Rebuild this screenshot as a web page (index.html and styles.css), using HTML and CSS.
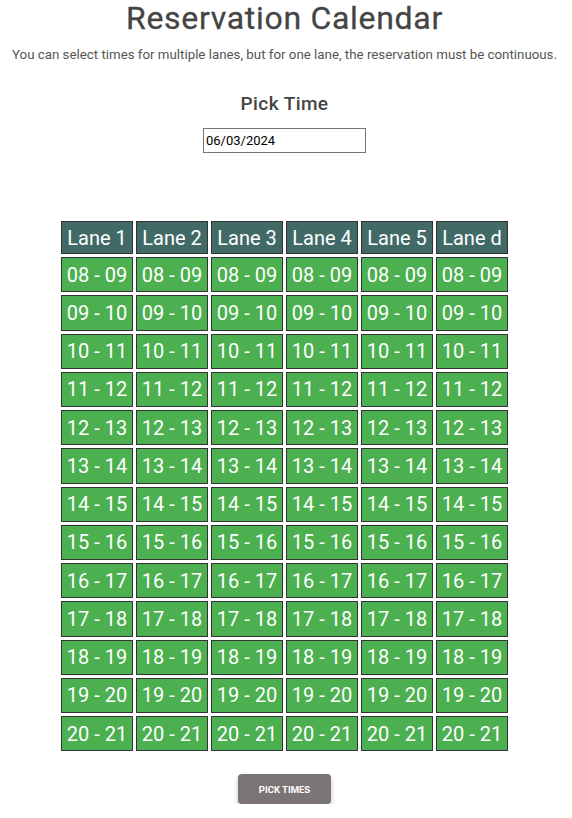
FILE: index.html
```html
<!DOCTYPE html>
<html>
<head>
<meta charset="utf-8">
<link rel="stylesheet" href="styles.css">
</head>
<body>
<div class="page">
  <h1 class="title">Reservation Calendar</h1>
  <p class="subtitle">You can select times for multiple lanes, but for one lane, the reservation must be continuous.</p>
  <h2 class="pick">Pick Time</h2>
  <input class="date" type="text" value="06/03/2024">
  <table class="cal">
    <thead>
      <tr><th>Lane 1</th><th>Lane 2</th><th>Lane 3</th><th>Lane 4</th><th>Lane 5</th><th>Lane d</th></tr>
    </thead>
    <tbody id="rows"></tbody>
  </table>
  <button class="btn">PICK TIMES</button>
</div>
<script src="app.js"></script>
</body>
</html>
```
FILE: app.js
```js
var tb = document.getElementById('rows');
for (var h = 8; h < 21; h++) {
  var a = (h < 10 ? '0' : '') + h, b = (h + 1 < 10 ? '0' : '') + (h + 1);
  var tr = document.createElement('tr');
  for (var i = 0; i < 6; i++) {
    var td = document.createElement('td');
    td.textContent = a + ' - ' + b;
    tr.appendChild(td);
  }
  tb.appendChild(tr);
}
```
FILE: styles.css
```css
html, body { margin: 0; padding: 0; background: #fff; }
body { font-family: Roboto, "Liberation Sans", sans-serif; color: #444; }
.page { display: flex; flex-direction: column; align-items: center; padding-right: 3px; }
.title { font-size: 32px; font-weight: 400; letter-spacing: 0.7px; line-height: 36px; margin: 0; color: #444; -webkit-text-stroke: 0.3px #444; }
.subtitle { font-size: 13.3px; margin: 11px 0 0; line-height: 16px; color: #555; }
.pick { font-size: 19px; font-weight: 500; letter-spacing: 0.4px; margin: 29px 0 0; line-height: 24px; color: #444; }
.date { margin-top: 12px; width: 163px; height: 25px; box-sizing: border-box; border: 1px solid #767676; padding: 0 2px; font-family: Roboto, sans-serif; font-size: 13px; color: #000; }
.cal { margin-top: 65px; border-collapse: separate; border-spacing: 3px; }
.cal th, .cal td { border: 1px solid #333; color: #fff; font-size: 20px; font-weight: 400; padding: 0; width: 72px; text-align: center; white-space: nowrap; box-sizing: border-box; }
.cal th { background: #416a67; height: 33px; }
.cal td { background: #4caf50; height: 35.25px; }
.btn { margin-top: 20px; width: 93px; height: 30px; border: none; border-radius: 4px; background: #7a7574; color: #fff; font-family: Roboto, sans-serif; font-weight: 700; font-size: 9.5px; box-shadow: 0 3px 5px rgba(0,0,0,0.25); }
```
